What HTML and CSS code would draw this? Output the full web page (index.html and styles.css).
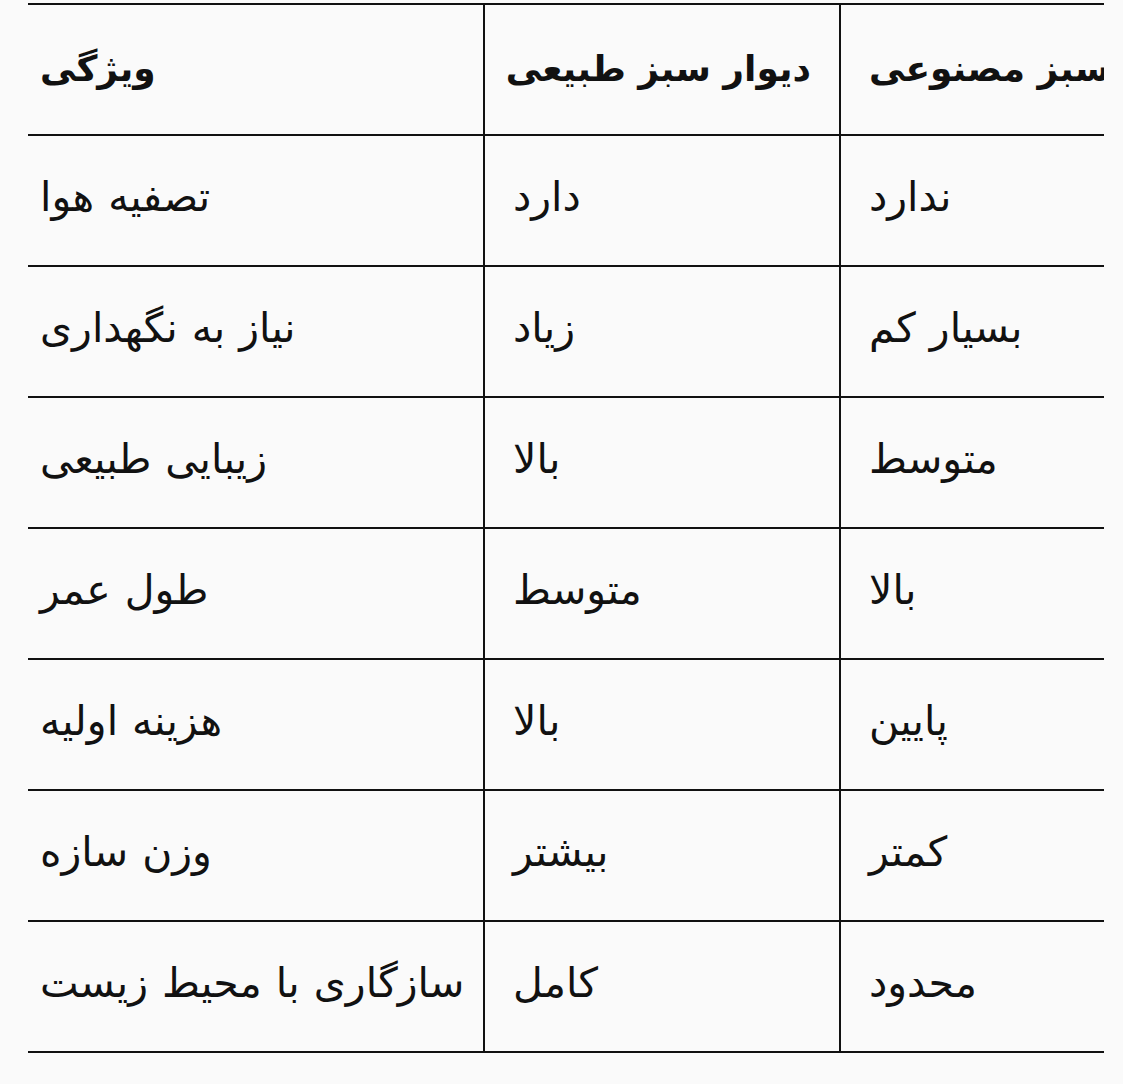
FILE: index.html
```html
<!DOCTYPE html>
<html lang="fa">
<head>
<meta charset="utf-8">
<link rel="stylesheet" href="styles.css">
</head>
<body>
<div class="wrap">
<table class="cmp">
<colgroup><col class="c1"><col class="c2"><col class="c3"></colgroup>
<thead>
<tr><th dir="rtl">ویژگی</th><th dir="rtl">دیوار سبز طبیعی</th><th dir="rtl">دیوار سبز مصنوعی</th></tr>
</thead>
<tbody>
<tr><td dir="rtl">تصفیه هوا</td><td dir="rtl">دارد</td><td dir="rtl">ندارد</td></tr>
<tr><td dir="rtl">نیاز به نگهداری</td><td dir="rtl">زیاد</td><td dir="rtl">بسیار کم</td></tr>
<tr><td dir="rtl">زیبایی طبیعی</td><td dir="rtl">بالا</td><td dir="rtl">متوسط</td></tr>
<tr><td dir="rtl">طول عمر</td><td dir="rtl">متوسط</td><td dir="rtl">بالا</td></tr>
<tr><td dir="rtl">هزینه اولیه</td><td dir="rtl">بالا</td><td dir="rtl">پایین</td></tr>
<tr><td dir="rtl">وزن سازه</td><td dir="rtl">بیشتر</td><td dir="rtl">کمتر</td></tr>
<tr><td dir="rtl">سازگاری با محیط زیست</td><td dir="rtl">کامل</td><td dir="rtl">محدود</td></tr>
</tbody>
</table>
</div>
</body>
</html>
```

FILE: styles.css
```css
html, body {
  margin: 0;
  padding: 0;
  background: #fafafa;
}
body {
  font-family: "DejaVu Sans", sans-serif;
  color: #111;
}
.wrap {
  margin: 3px 19px 0 28px;
  overflow: hidden;
}
.cmp {
  border-collapse: collapse;
  table-layout: fixed;
  width: 1232px;
}
.c1 { width: 456px; }
.c2 { width: 356px; }
.c3 { width: 420px; }
.cmp th, .cmp td {
  height: 131px;
  box-sizing: border-box;
  padding: 0 28px;
  text-align: left;
  vertical-align: middle;
  border-top: 2px solid #111;
  border-bottom: 2px solid #111;
  white-space: nowrap;
}
.cmp th {
  font-weight: bold;
  font-size: 36px;
  padding-bottom: 2px;
}
.cmp td {
  font-size: 41px;
  font-weight: normal;
  word-spacing: 1px;
  padding-bottom: 8px;
}
.cmp th:first-child, .cmp td:first-child {
  padding-left: 12px;
  padding-right: 0;
}
.cmp th + th, .cmp td + td {
  border-left: 2px solid #111;
}
```
